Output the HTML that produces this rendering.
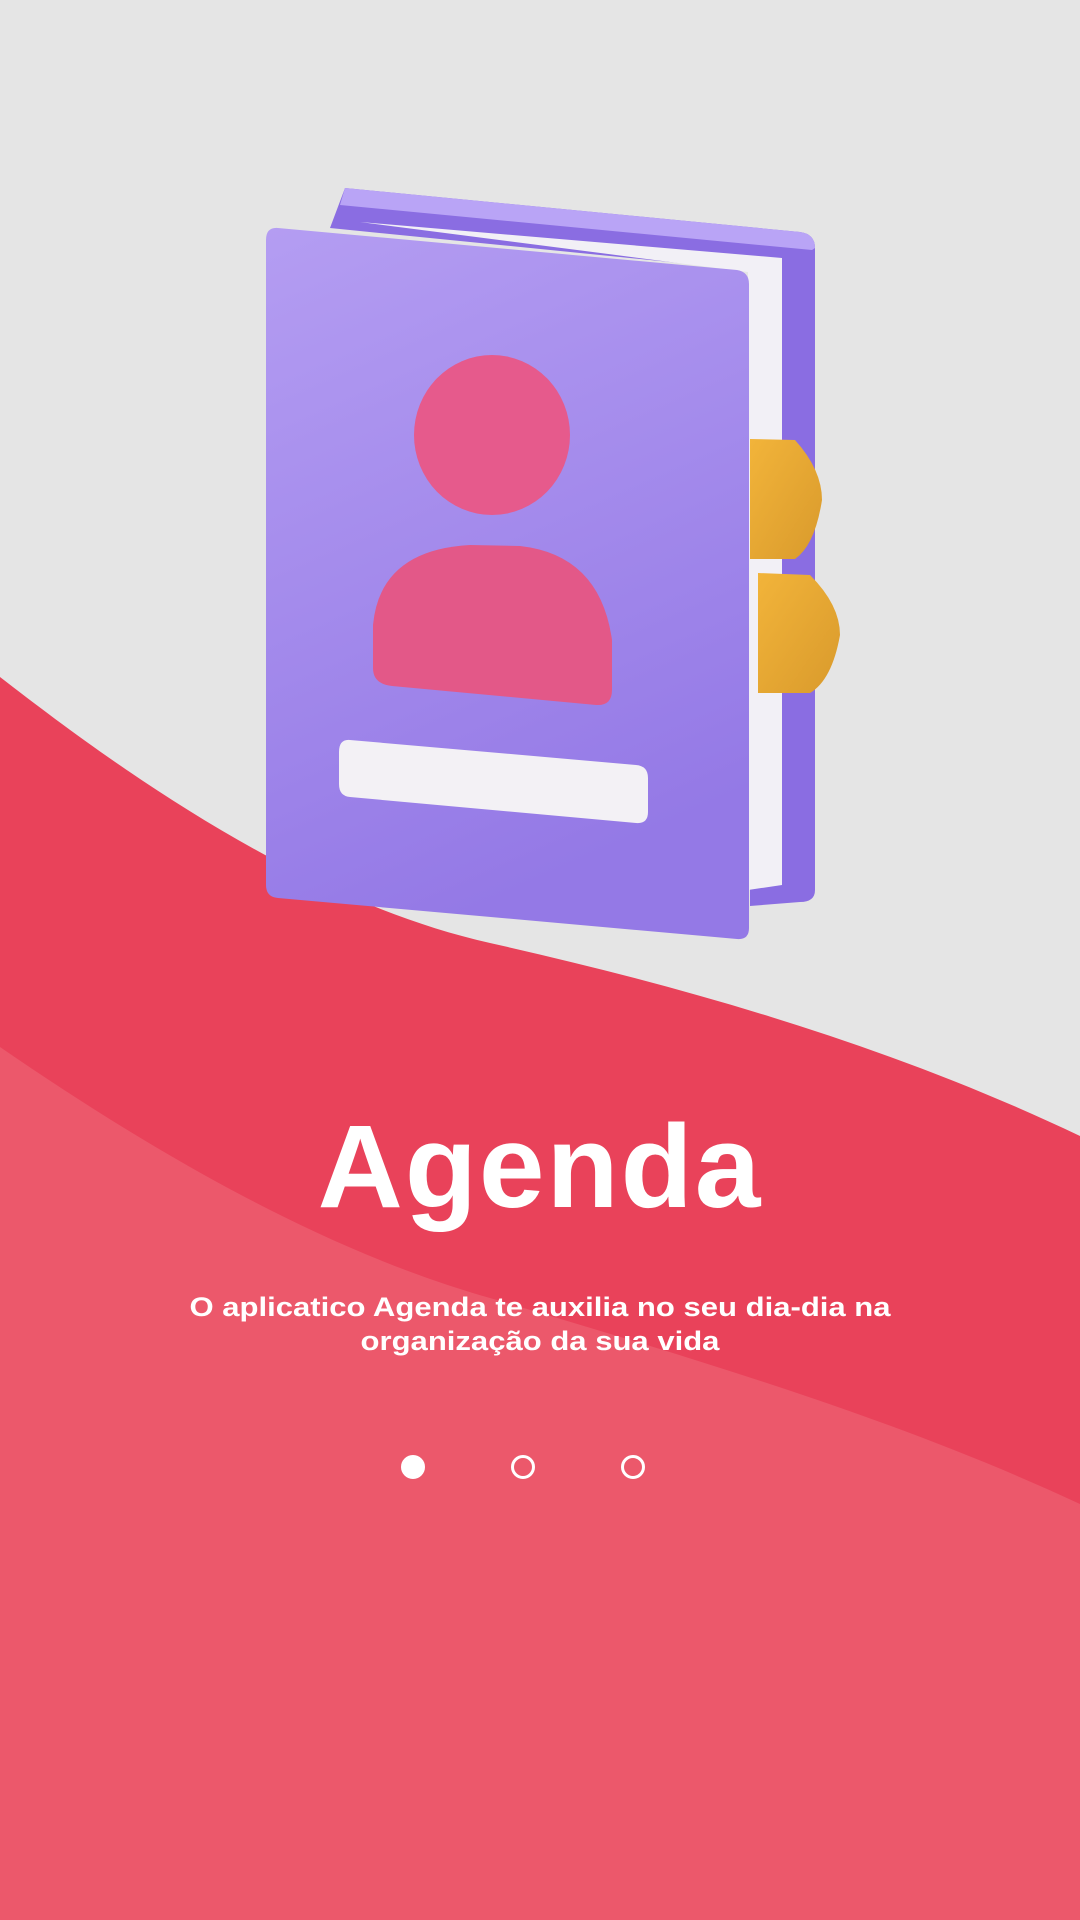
<!DOCTYPE html>
<html><head><meta charset="utf-8"><style>
html,body{margin:0;padding:0}
body{width:1080px;height:1920px;overflow:hidden;background:#e5e5e5;position:relative;font-family:"Liberation Sans",sans-serif}
svg{position:absolute;left:0;top:0}
.t{position:absolute;left:0;width:1080px;text-align:center;color:#fff;font-weight:bold}
.dot{position:absolute;width:18px;height:18px;border:3px solid #fff;border-radius:50%;top:1455px}
</style></head><body>
<svg width="1080" height="1920" viewBox="0 0 1080 1920">
<defs>
<linearGradient id="cv" x1="0" y1="0" x2="0.3" y2="1"><stop offset="0" stop-color="#b49df2"/><stop offset="1" stop-color="#9479e6"/></linearGradient>
<linearGradient id="yl" x1="0" y1="0" x2="1" y2="1"><stop offset="0" stop-color="#f2b43a"/><stop offset="1" stop-color="#d99a2c"/></linearGradient>
</defs>
<path d="M0,677 C120,770 300,900 490,943 C700,990 900,1050 1080,1136 L1080,1920 L0,1920Z" fill="#e9425a"/>
<path d="M0,1047 C150,1150 320,1250 490,1298 C700,1360 900,1420 1080,1504 L1080,1920 L0,1920Z" fill="#ec586b"/>
<path d="M345,188 L800,232 Q815,234 815,248 L815,890 Q815,902 800,902 L750,906 L750,270 L330,228 Z" fill="#8a6de2"/>
<path d="M345,188 L800,232 Q815,234 815,248 L812,250 L340,205 Z" fill="#b9a4f6"/>
<path d="M360,222 L782,258 L782,885 L748,890 L748,272 Z" fill="#f2f0f6"/>
<path d="M750,439 L795,440 Q822,470 822,500 Q815,545 795,559 L750,559Z" fill="url(#yl)"/>
<path d="M758,573 L810,575 Q840,605 840,635 Q832,680 810,693 L758,693Z" fill="url(#yl)"/>
<path d="M278,228 L737,270 Q749,272 749,284 L749,928 Q749,940 737,939 L278,898 Q266,897 266,885 L266,240 Q266,227 278,228Z" fill="url(#cv)"/>
<ellipse cx="494" cy="439" rx="72" ry="70" fill="#6f55d6" opacity="0.4"/>
<ellipse cx="492" cy="435" rx="78" ry="80" fill="#e65a8c"/>
<path d="M392,686 Q373,684 373,668 L373,625 Q380,550 470,545 L520,546 Q600,555 612,640 L612,690 Q612,706 596,705Z" fill="#e35888"/>
<path d="M350,740 L636,765 Q648,766 648,778 L648,812 Q648,824 636,823 L350,797 Q339,796 339,784 L339,752 Q339,739 350,740Z" fill="#f3f1f5"/>
</svg>
<div class="t" style="top:1108px;font-size:118px;line-height:118px;letter-spacing:2px">Agenda</div>
<div class="t" style="top:1290px;font-size:27px;line-height:34px;transform:scaleX(1.15)">O aplicatico Agenda te auxilia no seu dia-dia na<br>organização da sua vida</div>
<div class="dot" style="left:401px;background:#fff"></div>
<div class="dot" style="left:511px"></div>
<div class="dot" style="left:621px"></div>
</body></html>
